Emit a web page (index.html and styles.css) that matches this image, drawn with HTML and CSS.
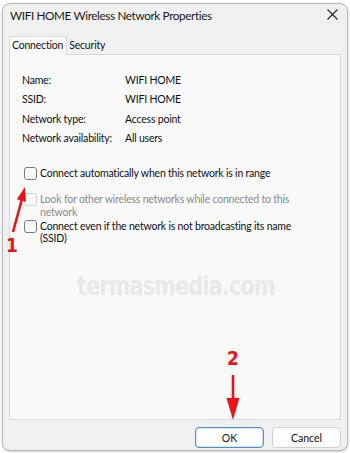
FILE: index.html
```html
<!DOCTYPE html>
<html>
<head>
<meta charset="utf-8">
<link rel="stylesheet" href="styles.css">
</head>
<body>
<div class="dialog">
  <div class="titlebar">
    <span class="title">WIFI HOME Wireless Network Properties</span>
    <svg class="close" width="11" height="11" viewBox="0 0 11 11"><path d="M0.5 0.5L10.5 10.5M10.5 0.5L0.5 10.5" stroke="#222" stroke-width="1.1" fill="none"/></svg>
  </div>
  <div class="tabs">
    <div class="tab active">Connection</div>
    <div class="tab">Security</div>
  </div>
  <div class="panel">
    <div class="props">
      <div class="lbl">Name:</div><div class="val">WIFI HOME</div>
      <div class="lbl">SSID:</div><div class="val">WIFI HOME</div>
      <div class="lbl">Network type:</div><div class="val">Access point</div>
      <div class="lbl">Network availability:</div><div class="val">All users</div>
    </div>
    <div class="checks">
      <div class="check first"><span class="box"></span><span class="ctext">Connect automatically when this network is in range</span></div>
      <div class="check disabled"><span class="box"></span><span class="ctext">Look for other wireless networks while connected to this network</span></div>
      <div class="check"><span class="box"></span><span class="ctext">Connect even if the network is not broadcasting its name (SSID)</span></div>
    </div>
    <div class="watermark">termasmedia.com</div>
  </div>
  <div class="buttons">
    <button class="btn default">OK</button>
    <button class="btn">Cancel</button>
  </div>
</div>
<svg class="anno anno1" width="40" height="60" viewBox="0 0 40 60">
  <path d="M13 52 L22 19" stroke="#e8141b" stroke-width="2.6" fill="none"/>
  <path d="M25 7 L16.8 19.3 L26 21.8 Z" fill="#e8141b"/>
</svg>
<div class="anno num1">1</div>
<div class="anno num2">2</div>
<svg class="anno anno2" width="20" height="50" viewBox="0 0 20 50">
  <path d="M10 2 L10 30" stroke="#e8141b" stroke-width="2.6" fill="none"/>
  <path d="M3.5 25 L16.5 25 L10 47 Z" fill="#e8141b"/>
</svg>
</body>
</html>
```
FILE: styles.css
```css
html, body {
  margin: 0;
  padding: 0;
  background: #ffffff;
}
body {
  width: 350px;
  height: 453px;
  overflow: hidden;
  position: relative;
  font-family: Lato, "Noto Sans", sans-serif;
  font-size: 10.5px;
  letter-spacing: -0.2px;
  color: #111;
}
.dialog {
  margin: 3px 0 0 2px;
  width: 346px;
  height: 448px;
  box-sizing: border-box;
  background: #f0f0f0;
  border: 1px solid #b9b9b9;
  border-radius: 8px;
  box-shadow: 0 1px 3px rgba(0,0,0,0.2);
  display: flex;
  flex-direction: column;
  padding: 0 6px 0 6px;
}
.titlebar {
  height: 31px;
  display: flex;
  align-items: center;
  justify-content: space-between;
  padding-left: 1px;
  padding-right: 3px;
  flex: none;
}
.title {
  font-size: 11.7px;
  letter-spacing: -0.35px;
  color: #1a1a1a;
  margin-top: -10px;
}
.close { margin-top: -11px; }
.tabs {
  display: flex;
  align-items: flex-end;
  height: 18px;
  margin-top: 1px;
  flex: none;
}
.tab {
  padding: 0 2px 0 2px;
  height: 16px;
  line-height: 15px;
  color: #111;
}
.tab.active {
  height: 18px;
  line-height: 17px;
  background: #f9f9f9;
  border: 1px solid #d9d9d9;
  border-bottom: none;
  padding: 0 3px 0 2px;
  position: relative;
  z-index: 1;
  margin-bottom: -1px;
}
.panel {
  height: 366px;
  flex: none;
  background: #f9f9f9;
  border: 1px solid #d9d9d9;
  padding: 16px 0 0 12px;
  box-sizing: border-box;
  display: flex;
  flex-direction: column;
}
.props {
  display: grid;
  grid-template-columns: 103px 1fr;
  line-height: 19.4px;
}
.checks {
  margin-top: 18px;
  display: flex;
  flex-direction: column;
  gap: 1.5px;
  padding-left: 2px;
}
.check {
  display: flex;
  align-items: flex-start;
  gap: 3px;
  line-height: 12.5px;
}
.check.first { margin-bottom: 12px; }
.box {
  width: 11px;
  height: 11px;
  border: 1px solid #7a7a7a;
  border-radius: 3px;
  background: #fcfcfc;
  flex: none;
}
.ctext { width: 280px; }
.check.disabled { color: #8a8a8a; }
.check.disabled .box { border-color: #d4d4d4; background: #f9f9f9; }
.watermark {
  margin-top: 26px;
  margin-left: 55px;
  font-family: "DejaVu Sans Condensed", "Liberation Sans", sans-serif;
  font-weight: bold;
  font-size: 26px;
  color: #e8e8e8;
  letter-spacing: -0.8px;
  transform: scaleX(0.88);
  transform-origin: left center;
  white-space: nowrap;
}
.buttons {
  flex: 1;
  display: flex;
  justify-content: flex-end;
  align-items: flex-start;
  gap: 8px;
  padding-top: 7px;
}
.btn {
  font-family: Lato, "Noto Sans", sans-serif;
  font-size: 10.5px;
  color: #111;
  width: 69px;
  height: 21px;
  padding: 0;
  background: #fdfdfd;
  border: 1px solid #d0d0d0;
  border-radius: 4px;
}
.btn.default {
  border: 1px solid #4a8fd0;
  box-shadow: inset 0 0 0 1px #d6e6f6;
}
.anno { position: absolute; }
.anno1 { left: 0; top: 180px; }
.num1, .num2 {
  font-family: "DejaVu Sans Condensed", "Liberation Sans", sans-serif;
  font-weight: bold;
  color: #e8141b;
  font-size: 19px;
  line-height: 19px;
}
.num1 { left: 6px; top: 236px; }
.num2 { left: 227px; top: 349px; }
.anno2 { left: 223px; top: 373px; }
```
